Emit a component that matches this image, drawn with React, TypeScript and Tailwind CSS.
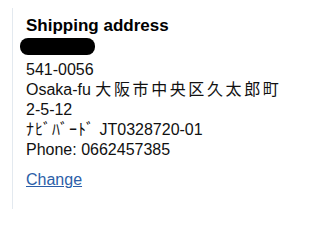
export default function App() {
  return (
    <div className="w-[303px] h-[209px] bg-white pt-2 pl-3 overflow-hidden">
      <div
        className="h-full border-l border-[#e3e9ef] pl-[13px] pt-2 text-[16px] leading-[20px] text-[#111]"
        style={{ fontFamily: '"Liberation Sans", Arial, "Noto Sans CJK JP", sans-serif' }}
      >
        <h2 className="text-[17px] font-bold leading-[20px] text-black">Shipping address</h2>
        {/* name is blacked out in the screenshot */}
        <div className="h-[24px] pt-[2px] -ml-[6px]">
          <div className="w-[75px] h-[17px] bg-black rounded-[8px]" />
        </div>
        <p>541-0056</p>
        <p>
          Osaka-fu <span className="tracking-[2.6px]">大阪市中央区久太郎町</span>
        </p>
        <p>2-5-12</p>
        <p>
          <span className="tracking-[1px]">ﾅﾋﾞﾊﾞｰﾄﾞ</span> JT0328720-01
        </p>
        <p>Phone: 0662457385</p>
        <a href="#" className="block mt-[10px] text-[#2b5ea8] underline">
          Change
        </a>
      </div>
    </div>
  );
}
